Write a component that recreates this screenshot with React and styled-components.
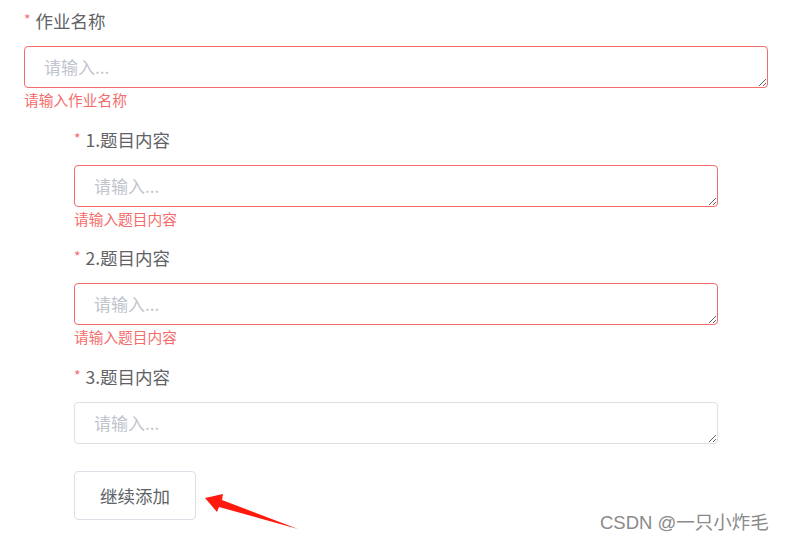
import React from "react";
import styled, { createGlobalStyle } from "styled-components";

const GlobalStyle = createGlobalStyle`
  body {
    margin: 0;
    background: #fff;
    font-family: "Noto Sans CJK SC", "Noto Sans", "Liberation Sans", sans-serif;
  }
`;

const Page = styled.div`
  position: relative;
  width: 787px;
  height: 543px;
  overflow: hidden;
`;

const Form = styled.div`
  width: 744px;
  padding-left: 24px;
`;

const Nested = styled.div`
  padding: 0 50px;
`;

const Label = styled.div`
  height: 42px;
  line-height: 42px;
  font-size: 17.5px;
  color: #606266;
  display: flex;
  align-items: center;
`;

const Star = styled.span`
  color: #f56c6c;
  font-size: 14px;
  margin-right: 5px;
  margin-top: -4px;
`;

const Area = styled.textarea`
  display: block;
  box-sizing: border-box;
  width: 100%;
  height: 42px;
  margin: 4px 0 0;
  padding: 8px 19px;
  font-family: inherit;
  font-size: 17px;
  line-height: 24px;
  color: #606266;
  border: 1px solid ${(p) => (p.$error ? "#f56c6c" : "#dcdfe6")};
  border-radius: 4px;
  outline: none;
  resize: vertical;
  &::placeholder {
    color: #c0c4cc;
  }
`;

const Error = styled.div`
  height: ${(p) => (p.$error ? "30.6px" : "27px")};
  line-height: 24px;
  font-size: 14.7px;
  color: #f56c6c;
`;

const Button = styled.button`
  width: 122px;
  height: 49px;
  background: #fff;
  border: 1px solid #dcdfe6;
  border-radius: 4px;
  font-family: inherit;
  font-size: 17.5px;
  color: #606266;
  padding: 0;
`;

const Arrow = styled.svg`
  position: absolute;
  left: 0;
  top: 0;
  pointer-events: none;
`;

const Watermark = styled.div`
  position: absolute;
  left: 600px;
  top: 510px;
  font-size: 18.5px;
  line-height: 26px;
  color: #8a8a8a;
  font-family: "Liberation Sans", "Noto Sans CJK SC", sans-serif;
`;

function Field({ label, error, msg }) {
  return (
    <div>
      <Label>
        <Star>*</Star>
        {label}
      </Label>
      <Area $error={error} placeholder="请输入..." />
      <Error $error={error}>{error ? msg : ""}</Error>
    </div>
  );
}

export default function App() {
  return (
    <Page>
      <GlobalStyle />
      <Form>
        <Field label="作业名称" error msg="请输入作业名称" />
        <Nested>
          <Field label="1.题目内容" error msg="请输入题目内容" />
          <Field label="2.题目内容" error msg="请输入题目内容" />
          <Field label="3.题目内容" />
          <Button>继续添加</Button>
        </Nested>
      </Form>
      <Arrow width="787" height="543">
        <polygon
          points="205,498 223,494 222,500 298,529 219,507 217,512"
          fill="#ff1a0d"
        />
      </Arrow>
      <Watermark>CSDN @一只小炸毛</Watermark>
    </Page>
  );
}
